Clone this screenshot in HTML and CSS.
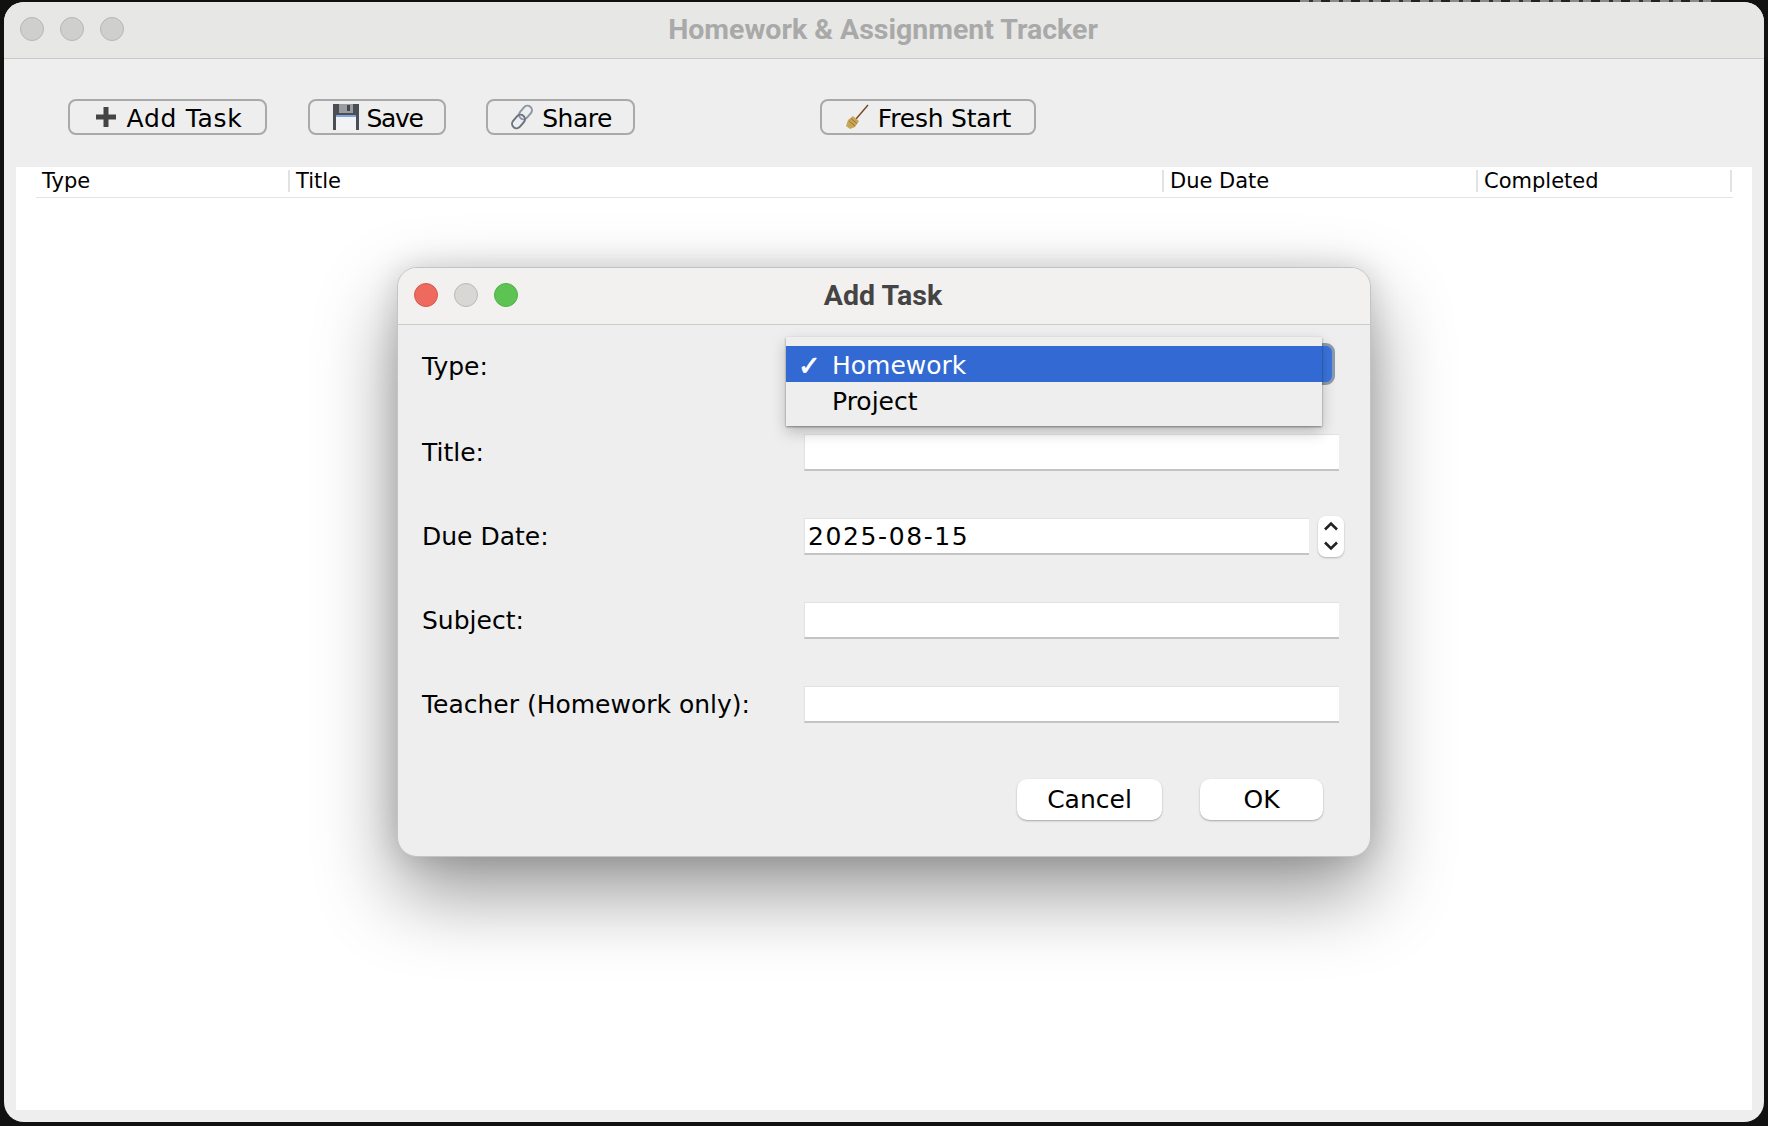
FILE: index.html
```html
<!DOCTYPE html>
<html lang="en">
<head>
    <meta name="viewport" content="width=device-width, initial-scale=1.0">
    <title>Homework &amp; Assignment Tracker</title>
    <link rel="stylesheet" href="styles.css">
</head>
<body>
    <div class="desk-strip"></div>

    <div class="window">
        <div class="titlebar">
            <div class="lights">
                <span class="light"></span>
                <span class="light"></span>
                <span class="light"></span>
            </div>
            <h1 class="window-title">Homework &amp; Assignment Tracker</h1>
        </div>

        <div class="toolbar">
            <button class="tool tool-add">
                <svg class="icon" width="20" height="20" viewBox="0 0 20 20"><path d="M7.500 0h5v7.500H20v5h-7.500V20h-5v-7.500H0v-5h7.500z" fill="#444"/></svg>
                <span>Add Task</span>
            </button>
            <button class="tool tool-save">
                <svg class="icon" width="28" height="28" viewBox="0 0 28 28">
                    <rect x="1" y="1" width="26" height="26" fill="#4b4f55"/>
                    <rect x="7" y="1" width="14" height="9" fill="#9a9ca0"/>
                    <rect x="15" y="2" width="3" height="6" fill="#44474c"/>
                    <rect x="4" y="12" width="20" height="15" fill="#f2f3f6"/>
                    <rect x="4" y="12" width="20" height="2" fill="#7fa6dc"/>
                </svg>
                <span>Save</span>
            </button>
            <button class="tool tool-share">
                <svg class="icon" width="26" height="28" viewBox="0 0 26 28" fill="none">
                    <rect x="12" y="2" width="9" height="15" rx="4.500" transform="rotate(40 16.500 9.500)" stroke="#8d97a3" stroke-width="2"/>
                    <rect x="5" y="11" width="9" height="15" rx="4.500" transform="rotate(40 9.500 18.500)" stroke="#6a7480" stroke-width="2"/>
                </svg>
                <span>Share</span>
            </button>
            <button class="tool tool-fresh">
                <svg class="icon" width="24" height="26" viewBox="0 0 24 26" fill="none">
                    <path d="M23 1 11 15" stroke="#7a4a2b" stroke-width="1.500"/>
                    <path d="M8 12 14 17 10 23 5 25 1 22 3 16z" fill="#c9a558"/>
                    <path d="M4 17 10 22M6 14.500 12 19.500" stroke="#94733a" stroke-width="1"/>
                </svg>
                <span>Fresh Start</span>
            </button>
        </div>

        <div class="content">
            <div class="table-head">
                <div class="col">Type</div>
                <div class="col">Title</div>
                <div class="col">Due Date</div>
                <div class="col">Completed</div>
            </div>
        </div>

        <div class="dialog">
            <div class="dialog-titlebar">
                <div class="lights">
                    <span class="light light-red"></span>
                    <span class="light light-off"></span>
                    <span class="light light-green"></span>
                </div>
                <h2 class="dialog-title">Add Task</h2>
            </div>

            <div class="form">
                <label class="form-label form-label-first">Type:</label>
                <div class="combo"></div>

                <label class="form-label">Title:</label>
                <div class="field"></div>

                <label class="form-label">Due Date:</label>
                <div class="date-row">
                    <div class="field field-date">2025-08-15</div>
                    <div class="spinner">
                        <svg width="26" height="20" viewBox="0 0 26 20" fill="none"><path d="M7 13.500 13 7.500 19 13.500" stroke="#222" stroke-width="2.600"/></svg>
                        <svg width="26" height="20" viewBox="0 0 26 20" fill="none"><path d="M7 6.500 13 12.500 19 6.500" stroke="#222" stroke-width="2.600"/></svg>
                    </div>
                </div>

                <label class="form-label">Subject:</label>
                <div class="field"></div>

                <label class="form-label">Teacher (Homework only):</label>
                <div class="field"></div>
            </div>

            <div class="dialog-actions">
                <button class="push push-cancel">Cancel</button>
                <button class="push push-ok">OK</button>
            </div>

            <ul class="popup">
                <li class="popup-item popup-selected"><span class="check">✓</span>Homework</li>
                <li class="popup-item"><span class="check"></span>Project</li>
            </ul>
        </div>
    </div>
</body>
</html>
```
FILE: styles.css
```css
* {
    box-sizing: border-box;
}
html, body {
    height: 100%;
}
body {
    margin: 0;
    overflow: hidden;
    background: #111;
    font-family: "DejaVu Sans", sans-serif;
    color: #000;
}
.desk-strip {
    position: absolute;
    top: 0;
    left: 1300px;
    width: 420px;
    height: 3px;
    background: repeating-linear-gradient(90deg, #8a8a8a 0, #8a8a8a 9px, #333 9px, #333 13px, #8a8a8a 13px, #8a8a8a 21px, #222 21px, #222 30px);
}

/* main window */
.window {
    position: absolute;
    top: 2px;
    left: 4px;
    width: 1760px;
    height: 1120px;
    display: flex;
    flex-direction: column;
    background: #eee;
    border-radius: 20px;
    overflow: hidden;
}
.titlebar {
    display: flex;
    align-items: center;
    justify-content: center;
    position: relative;
    flex: none;
    height: 57px;
    padding-right: 2px;
    background: #e7e7e5;
    border-bottom: 1px solid #c9c9c7;
}
.lights {
    position: absolute;
    left: 16px;
    top: 15px;
    display: flex;
    gap: 16px;
}
.light {
    width: 24px;
    height: 24px;
    border-radius: 50%;
    background: #cfcfcd;
    border: 1px solid #b6b6b4;
}
.window-title {
    margin: 0 0 2px;
    font-family: Roboto, sans-serif;
    font-size: 28.5px;
    font-weight: 700;
    color: #a9a9a9;
}

/* toolbar */
.toolbar {
    display: flex;
    flex: none;
    align-items: flex-start;
    height: 108px;
    padding: 40px 0 0 64px;
}
.tool {
    display: flex;
    align-items: center;
    justify-content: center;
    height: 36px;
    padding: 0;
    background: transparent;
    border: 2px solid #a9a9a9;
    border-radius: 8px;
    font-family: inherit;
    font-size: 25px;
    color: #000;
}
.tool span {
    padding-top: 3px;
}
.tool-add {
    width: 199px;
    padding-left: 3px;
    gap: 11px;
    letter-spacing: 0.7px;
}
.tool-save {
    width: 138px;
    margin-left: 41px;
    gap: 7px;
    letter-spacing: -1.4px;
}
.tool-share {
    width: 149px;
    margin-left: 40px;
    gap: 7px;
    letter-spacing: -0.5px;
}
.tool-fresh {
    width: 216px;
    margin-left: 185px;
    gap: 9px;
    letter-spacing: -0.2px;
}

/* table */
.content {
    flex: 1;
    margin: 0 12px 12px;
    padding: 0 19px 0 20px;
    background: #fff;
}
.table-head {
    display: grid;
    grid-template-columns: 254px 874px 314px 254px;
    height: 31px;
    padding-top: 3px;
    border-bottom: 1px solid #e4e4e4;
}
.col {
    height: 22px;
    padding-left: 6px;
    border-right: 2px solid #e2e2e2;
    font-size: 21px;
    line-height: 22px;
}

/* dialog */
.dialog {
    position: absolute;
    top: 265px;
    left: 393px;
    width: 974px;
    height: 590px;
    background: #eee;
    border: 1px solid #c4c4c4;
    border-radius: 20px;
    box-shadow: 0 35px 80px rgba(0, 0, 0, 0.42), 0 0 30px rgba(0, 0, 0, 0.14);
}
.dialog-titlebar {
    display: flex;
    align-items: center;
    justify-content: center;
    position: relative;
    height: 57px;
    padding-right: 2px;
    background: #f2f1ef;
    border-bottom: 1px solid #cbcbc9;
    border-radius: 19px 19px 0 0;
}
.dialog-titlebar .lights {
    left: 16px;
}
.light-red {
    background: #ee6a5f;
    border-color: #d9574d;
}
.light-off {
    background: #d8d7d4;
    border-color: #bab9b6;
}
.light-green {
    background: #5dc453;
    border-color: #4fb046;
}
.dialog-title {
    margin: 0 0 2px;
    font-family: Roboto, sans-serif;
    font-size: 28.5px;
    font-weight: 700;
    color: #444;
}

/* form */
.form {
    display: grid;
    grid-template-columns: 382px 535px;
    grid-auto-rows: 37px;
    row-gap: 47px;
    align-items: center;
    padding: 25px 0 0 24px;
}
.form-label {
    font-size: 25px;
}
.form-label-first {
    margin-bottom: 4px;
}
.field {
    height: 37px;
    padding: 2px 0 0 3px;
    background: #fff;
    border-top: 1px solid #e2e2e2;
    border-left: 1px solid #e2e2e2;
    border-bottom: 2px solid #c4c4c4;
    font-size: 25px;
    line-height: 32px;
}
.combo {
    width: 531px;
    height: 42px;
    margin-top: -9px;
    background: #3a75dd;
    border: 3px solid #8d9aae;
    border-radius: 9px;
}
.date-row {
    display: flex;
    align-items: center;
    gap: 9px;
}
.field-date {
    flex: none;
    width: 505px;
    letter-spacing: 1.6px;
}
.spinner {
    display: flex;
    flex: none;
    flex-direction: column;
    width: 26px;
    height: 41px;
    background: #fff;
    border-radius: 8px;
    box-shadow: 0 1px 2px rgba(0, 0, 0, 0.25);
}

/* buttons at the bottom */
.dialog-actions {
    display: flex;
    justify-content: flex-end;
    gap: 38px;
    margin-top: 56px;
    padding-right: 47px;
}
.push {
    height: 41px;
    padding: 0;
    background: #fff;
    border: none;
    border-radius: 10px;
    box-shadow: 0 1px 2px rgba(0, 0, 0, 0.3);
    font-family: inherit;
    font-size: 25px;
    color: #000;
}
.push-cancel {
    width: 145px;
}
.push-ok {
    width: 123px;
}

/* dropdown list open over the form */
.popup {
    position: absolute;
    top: 69px;
    left: 388px;
    width: 536px;
    height: 89px;
    margin: 0;
    padding: 9px 0 0;
    list-style: none;
    background: #eee;
    box-shadow: 0 1px 2px rgba(0, 0, 0, 0.4), 0 6px 14px rgba(0, 0, 0, 0.22);
}
.popup-item {
    display: flex;
    align-items: center;
    height: 36px;
    padding-top: 3px;
    font-size: 25px;
}
.popup-selected {
    background: #3269d3;
    color: #fff;
}
.check {
    width: 46px;
    padding-left: 12px;
    font-size: 27px;
    -webkit-text-stroke: 0.8px #fff;
}
```
